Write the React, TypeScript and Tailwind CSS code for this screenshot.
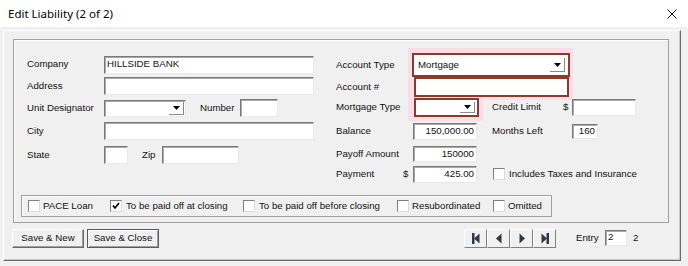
import React from "react";

const sunken =
  "bg-white border border-t-[#7a7a7a] border-l-[#7a7a7a] border-r-[#e8e8e8] border-b-[#e8e8e8] shadow-[inset_1px_1px_0_#a8a8a8]";
const red = "bg-white border-2 border-[#8c3b2a]";
const pink = "bg-[#fbdde8]";

const Arrow = () => (
  <div className="flex items-center justify-center w-[15px] h-full border-r border-b border-[#8a8a8a] bg-white">
    <svg width="7" height="4" viewBox="0 0 7 4">
      <path d="M0 0 H7 L3.5 4 Z" fill="#000" />
    </svg>
  </div>
);

const Field = ({
  w,
  h,
  value,
  right,
  className,
}: {
  w: string;
  h: string;
  value?: string;
  right?: boolean;
  className?: string;
}) => (
  <div
    className={`${w} ${h} ${className ?? sunken} flex items-center px-[2px] ${
      right ? "justify-end" : ""
    }`}
  >
    {value}
  </div>
);

const Combo = ({
  w,
  h,
  value,
  className,
}: {
  w: string;
  h: string;
  value?: string;
  className?: string;
}) => (
  <div className={`${w} ${h} ${className ?? sunken} flex items-center`}>
    <div className="flex-1 pl-[2px]">{value}</div>
    <div className="h-full py-[1px] pr-[1px]">
      <Arrow />
    </div>
  </div>
);

const Check = ({ checked }: { checked?: boolean }) => (
  <span className="w-[12px] h-[12px] shrink-0 bg-white border border-t-[#808080] border-l-[#808080] border-r-[#dcdcdc] border-b-[#dcdcdc] flex items-center justify-center">
    {checked && (
      <svg width="8" height="8" viewBox="0 0 8 8">
        <path d="M1 3.5 L3 6 L7 1" stroke="#000" strokeWidth="1.7" fill="none" />
      </svg>
    )}
  </span>
);

const Btn = ({ label, isDefault }: { label: string; isDefault?: boolean }) => (
  <div
    className={`w-[72px] h-[19px] flex items-center justify-center bg-[#f0f0f0] ${
      isDefault
        ? "border border-[#5a5a5a] shadow-[inset_1px_1px_0_#fff,inset_-1px_-1px_0_#a0a0a0]"
        : "border border-t-white border-l-white border-r-[#696969] border-b-[#696969] shadow-[inset_-1px_-1px_0_#a0a0a0]"
    }`}
  >
    {label}
  </div>
);

const NavIcon = ({ kind }: { kind: "first" | "prev" | "next" | "last" }) => (
  <svg width="8" height="11" viewBox="0 0 8 11" fill="#2a3b47">
    {kind === "first" && (
      <>
        <rect x="0" y="0" width="2.5" height="11" />
        <path d="M7.5 0.5 V10.5 L2 5.5 Z" />
      </>
    )}
    {kind === "prev" && <path d="M6.5 0.5 V10.5 L1 5.5 Z" />}
    {kind === "next" && <path d="M1.5 0.5 V10.5 L7 5.5 Z" />}
    {kind === "last" && (
      <>
        <path d="M0.5 0.5 V10.5 L6 5.5 Z" />
        <rect x="5.5" y="0" width="2.5" height="11" />
      </>
    )}
  </svg>
);

export default function App() {
  return (
    <div className="w-[688px] h-[266px] bg-[#f0f0f0] text-[9.7px] text-[#111] font-['Liberation_Sans',Arial,sans-serif] overflow-hidden">
      {/* title bar */}
      <div className="h-[27px] bg-white flex items-center justify-between pl-[8px] pr-[11px]">
        <div className="text-[11.5px] text-black font-['Noto_Sans',sans-serif]">
          Edit Liability (2 of 2)
        </div>
        <svg width="10" height="10" viewBox="0 0 10 10">
          <path d="M0.5 0.5 L9.5 9.5 M9.5 0.5 L0.5 9.5" stroke="#111" strokeWidth="1" />
        </svg>
      </div>

      {/* frame */}
      <div className="ml-[3px] mt-[3px] w-[678px] h-[231px] border border-t-white border-l-white border-r-[#696969] border-b-[#696969] shadow-[inset_-1px_-1px_0_#c8c8c8]">
        {/* panel */}
        <div className="ml-[9px] mt-[8px] w-[656px] h-[184px] border border-[#a0a0a0] shadow-[inset_1px_1px_0_#fff]">
          <div className="flex pl-[13px]">
            {/* left column */}
            <div className="w-[287px] pt-[14px] flex flex-col">
              <div className="h-[21px] flex items-center">
                <div className="w-[77px]">Company</div>
                <Field w="w-[210px]" h="h-[18px]" value="HILLSIDE BANK" />
              </div>
              <div className="h-[22px] flex items-center">
                <div className="w-[77px]">Address</div>
                <Field w="w-[210px]" h="h-[18px]" />
              </div>
              <div className="h-[22px] flex items-center">
                <div className="w-[77px]">Unit Designator</div>
                <Combo w="w-[82px]" h="h-[17px]" />
                <div className="ml-[14px] w-[40px]">Number</div>
                <Field w="w-[38px]" h="h-[18px]" />
              </div>
              <div className="h-[24px] flex items-center">
                <div className="w-[77px]">City</div>
                <Field w="w-[210px]" h="h-[18px]" />
              </div>
              <div className="h-[24px] flex items-center">
                <div className="w-[77px]">State</div>
                <Field w="w-[24px]" h="h-[18px]" />
                <div className="ml-[14px] w-[20px]">Zip</div>
                <Field w="w-[77px]" h="h-[18px]" />
              </div>
            </div>

            {/* right column */}
            <div className="ml-[22px] pt-[13px] flex flex-col">
              <div className="h-[24px] flex items-center">
                <div className="w-[72px]">Account Type</div>
                <div className={`pl-[4px] pr-[3px] -mr-[3px] -mt-[5px] pt-[5px] ${pink}`}>
                  <Combo w="w-[158px]" h="h-[24px]" value="Mortgage" className={`${red} p-[2px]`} />
                </div>
              </div>
              <div className="h-[20px] flex items-center">
                <div className="w-[72px]">Account #</div>
                <div className={`pl-[6px] pr-[4px] -mr-[4px] -mb-[3px] pb-[3px] ${pink}`}>
                  <Field w="w-[155px]" h="h-[20px]" className={red} />
                </div>
              </div>
              <div className="h-[21px] flex items-center">
                <div className="w-[72px]">Mortgage Type</div>
                <div className={`self-stretch flex items-center pl-[6px] pr-[4px] -mr-[4px] -mb-[3px] pb-[3px] ${pink}`}>
                  <Combo w="w-[65px]" h="h-[19px]" className={`${red} p-[1px]`} />
                </div>
                <div className="ml-[13px] w-[71px]">Credit Limit</div>
                <div className="w-[9px]">$</div>
                <Field w="w-[64px]" h="h-[17px]" />
              </div>
              <div className="h-[26px] flex items-center">
                <div className="w-[77px]">Balance</div>
                <Field w="w-[64px]" h="h-[17px]" value="150,000.00" right />
                <div className="ml-[15px] w-[80px]">Months Left</div>
                <Field w="w-[26px]" h="h-[15px]" value="160" right />
              </div>
              <div className="h-[20px] flex items-center">
                <div className="w-[77px]">Payoff Amount</div>
                <Field w="w-[64px]" h="h-[16px]" value="150000" right />
              </div>
              <div className="h-[20px] flex items-center">
                <div className="w-[67px]">Payment</div>
                <div className="w-[10px]">$</div>
                <Field w="w-[64px]" h="h-[17px]" value="425.00" right />
                <div className="ml-[16px]">
                  <Check />
                </div>
                <div className="ml-[4px]">Includes Taxes and Insurance</div>
              </div>
            </div>
          </div>

          {/* flags */}
          <div className="ml-[7px] mt-[11px] w-[531px] h-[22px] border border-[#a0a0a0] shadow-[inset_1px_1px_0_#fff] flex items-center pl-[6px]">
            <div className="w-[82px] flex items-center gap-[3px]">
              <Check />
              <span>PACE Loan</span>
            </div>
            <div className="w-[133px] flex items-center gap-[4px]">
              <Check checked />
              <span>To be paid off at closing</span>
            </div>
            <div className="w-[154px] flex items-center gap-[4px]">
              <Check />
              <span>To be paid off before closing</span>
            </div>
            <div className="w-[96px] flex items-center gap-[3px]">
              <Check />
              <span>Resubordinated</span>
            </div>
            <div className="flex items-center gap-[3px]">
              <Check />
              <span>Omitted</span>
            </div>
          </div>
        </div>

        {/* footer */}
        <div className="mt-[6px] pl-[8px] flex items-center">
          <div className="flex gap-[3px]">
            <Btn label="Save & New" />
            <Btn label="Save & Close" isDefault />
          </div>
          <div className="ml-[305px] flex -mt-[1px]">
            {(["first", "prev", "next", "last"] as const).map((k) => (
              <div
                key={k}
                className="w-[23px] h-[19px] flex items-center justify-center border border-t-white border-l-white border-r-[#808080] border-b-[#808080]"
              >
                <NavIcon kind={k} />
              </div>
            ))}
          </div>
          <div className="ml-[20px] w-[29px]">Entry</div>
          <Field w="w-[22px]" h="h-[16px]" value="2" className={`${sunken} -mt-[2px]`} />
          <div className="ml-[6px]">2</div>
        </div>
      </div>
    </div>
  );
}
